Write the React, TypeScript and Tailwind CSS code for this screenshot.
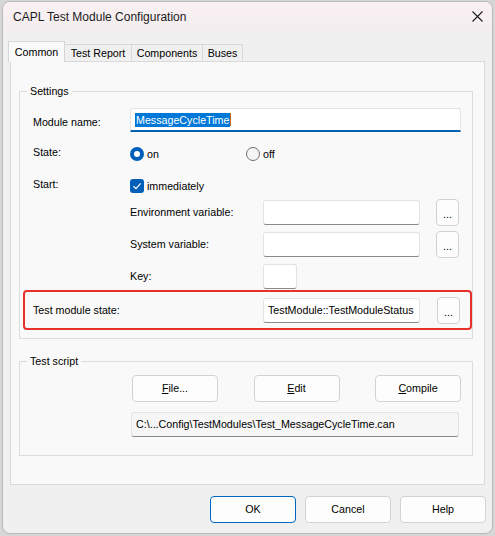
import React from 'react';

const TextBox: React.FC<{ width: string; text?: string; readOnly?: boolean }> = ({ width, text, readOnly }) => (
  <div
    className={`${width} h-[25px] flex items-center pl-[4px] rounded-[3px] border border-[#e3e3e3] border-b-[#8a8a8a] ${
      readOnly ? 'bg-[#f6f6f6]' : 'bg-white'
    } text-[10.7px] text-black whitespace-nowrap overflow-hidden`}
  >
    {text}
  </div>
);

const DotsButton: React.FC = () => (
  <button className="w-[23px] h-[27px] rounded-[4px] border border-[#d2d2d2] bg-[#fdfdfd] text-[10.7px] leading-none pt-[4px] text-black">
    ...
  </button>
);

const PushButton: React.FC<{ label: React.ReactNode; primary?: boolean }> = ({ label, primary }) => (
  <button
    className={`w-[86px] h-[27px] rounded-[4px] border ${
      primary ? 'border-[#0067c0]' : 'border-[#d2d2d2]'
    } bg-[#fdfdfd] text-[10.7px] text-black flex items-center justify-center`}
  >
    {label}
  </button>
);

export default function App() {
  return (
    <div className="w-[495px] h-[536px] bg-[#d6d6d6] pl-[2px] pr-[2px] pt-[1px] pb-[2px] font-['Liberation_Sans',Arial,sans-serif]">
      <div className="h-full flex flex-col bg-[#f0f0f0] border border-[#b9b9b9] rounded-[8px] overflow-hidden">
        {/* title bar */}
        <div className="h-[31px] shrink-0 flex items-center justify-between pl-[10px] pr-[9px] bg-gradient-to-b from-[#fbf0f3] to-[#f2eeef]">
          <span className="text-[12px] text-[#1b1b1b] mt-[-2px]">CAPL Test Module Configuration</span>
          <svg width="11" height="11" viewBox="0 0 11 11" className="mt-[-2px]">
            <path d="M0.5 0.5 L10.5 10.5 M10.5 0.5 L0.5 10.5" stroke="#1b1b1b" strokeWidth="1.1" />
          </svg>
        </div>

        <div className="flex flex-col px-[7px]">
          {/* tabs */}
          <div className="mt-[8px] h-[21px] flex items-end text-[10.7px] text-black">
            <div className="relative z-10 ml-[-2px] w-[57px] h-[21px] flex items-center justify-center bg-[#f9f9f9] border border-b-0 border-[#d6d6d6]">
              Common
            </div>
            <div className="w-[67px] h-[18px] flex items-center justify-center bg-[#f0f0f0] border-t border-r border-[#d9d9d9]">
              Test Report
            </div>
            <div className="w-[71px] h-[18px] flex items-center justify-center bg-[#f0f0f0] border-t border-r border-[#d9d9d9]">
              Components
            </div>
            <div className="w-[40px] h-[18px] flex items-center justify-center bg-[#f0f0f0] border-t border-r border-[#d9d9d9]">
              Buses
            </div>
          </div>

          {/* tab panel */}
          <div className="mt-[-1px] border border-[#d9d9d9] bg-[#f9f9f9] pt-[22px] pb-[28px] pl-[8px] pr-[11px] text-[10.7px] text-black">
            <fieldset className="border border-[#dcdcdc] pl-[3px] pr-0 pb-[8px]">
              <legend className="ml-[4px] px-[3px] leading-[14px]">Settings</legend>

              <div className="mt-[10px] h-[24px] flex items-center pl-[10px] pr-[11px]">
                <span className="w-[97px] pt-[4px]">Module name:</span>
                <div className="flex-1 h-[24px] flex items-center pl-[4px] bg-white border border-[#e3e3e3] border-b-2 border-b-[#0063b1] rounded-t-[3px]">
                  <span className="bg-[#0078d7] text-white px-[1px] leading-[14px]">MessageCycleTime</span>
                  <span className="w-px h-[13px] bg-[#c07020]" />
                </div>
              </div>

              <div className="mt-[12px] h-[20px] flex items-center pl-[10px]">
                <span className="w-[97px] self-start">State:</span>
                <div className="w-[116px] flex items-center gap-[3px]">
                  <span className="w-[14px] h-[14px] rounded-full bg-[#005fb8] flex items-center justify-center">
                    <span className="w-[6px] h-[6px] rounded-full bg-white" />
                  </span>
                  <span>on</span>
                </div>
                <div className="flex items-center gap-[3px]">
                  <span className="w-[14px] h-[14px] rounded-full border border-[#6f6f6f] bg-[#f5f5f5]" />
                  <span>off</span>
                </div>
              </div>

              <div className="mt-[12px] h-[20px] flex items-center pl-[10px]">
                <span className="w-[97px] self-start">Start:</span>
                <div className="flex items-center gap-[3px]">
                  <span className="w-[14px] h-[14px] rounded-[3px] bg-[#005fb8] flex items-center justify-center">
                    <svg width="10" height="10" viewBox="0 0 10 10">
                      <path d="M1.5 5.2 L4 7.6 L8.6 2.4" stroke="white" strokeWidth="1.2" fill="none" />
                    </svg>
                  </span>
                  <span>immediately</span>
                </div>
              </div>

              <div className="mt-[3px] h-[26px] flex items-center pl-[107px] pr-[13px]">
                <span className="w-[133px]">Environment variable:</span>
                <TextBox width="w-[157px]" />
                <span className="ml-auto">
                  <DotsButton />
                </span>
              </div>

              <div className="mt-[6px] h-[26px] flex items-center pl-[107px] pr-[13px]">
                <span className="w-[133px]">System variable:</span>
                <TextBox width="w-[157px]" />
                <span className="ml-auto">
                  <DotsButton />
                </span>
              </div>

              <div className="mt-[6px] h-[26px] flex items-center pl-[107px]">
                <span className="w-[133px]">Key:</span>
                <TextBox width="w-[34px]" />
              </div>

              <div className="mt-[1px] h-[40px] flex items-center border-2 border-[#e8302a] rounded-[4px] pl-[8px] pr-[10px]">
                <span className="w-[230px]">Test module state:</span>
                <TextBox width="w-[157px]" text="TestModule::TestModuleStatus" />
                <span className="ml-auto">
                  <DotsButton />
                </span>
              </div>
            </fieldset>

            <fieldset className="mt-[15px] border border-[#dcdcdc] pl-[112px] pb-[18px]">
              <legend className="ml-[-105px] px-[3px] leading-[14px]">Test script</legend>
              <div className="mt-[7px] w-[329px] flex justify-between">
                <PushButton label={<><span className="underline">F</span>ile...</>} />
                <PushButton label={<><span className="underline">E</span>dit</>} />
                <PushButton label={<><span className="underline">C</span>ompile</>} />
              </div>
              <div className="mt-[10px] ml-[-1px]">
                <TextBox width="w-[328px]" readOnly text="C:\...Config\TestModules\Test_MessageCycleTime.can" />
              </div>
            </fieldset>
          </div>

          {/* dialog buttons */}
          <div className="mt-[11px] mr-[-1px] flex justify-end gap-[9px]">
            <PushButton label="OK" primary />
            <PushButton label="Cancel" />
            <PushButton label="Help" />
          </div>
        </div>
      </div>
    </div>
  );
}
